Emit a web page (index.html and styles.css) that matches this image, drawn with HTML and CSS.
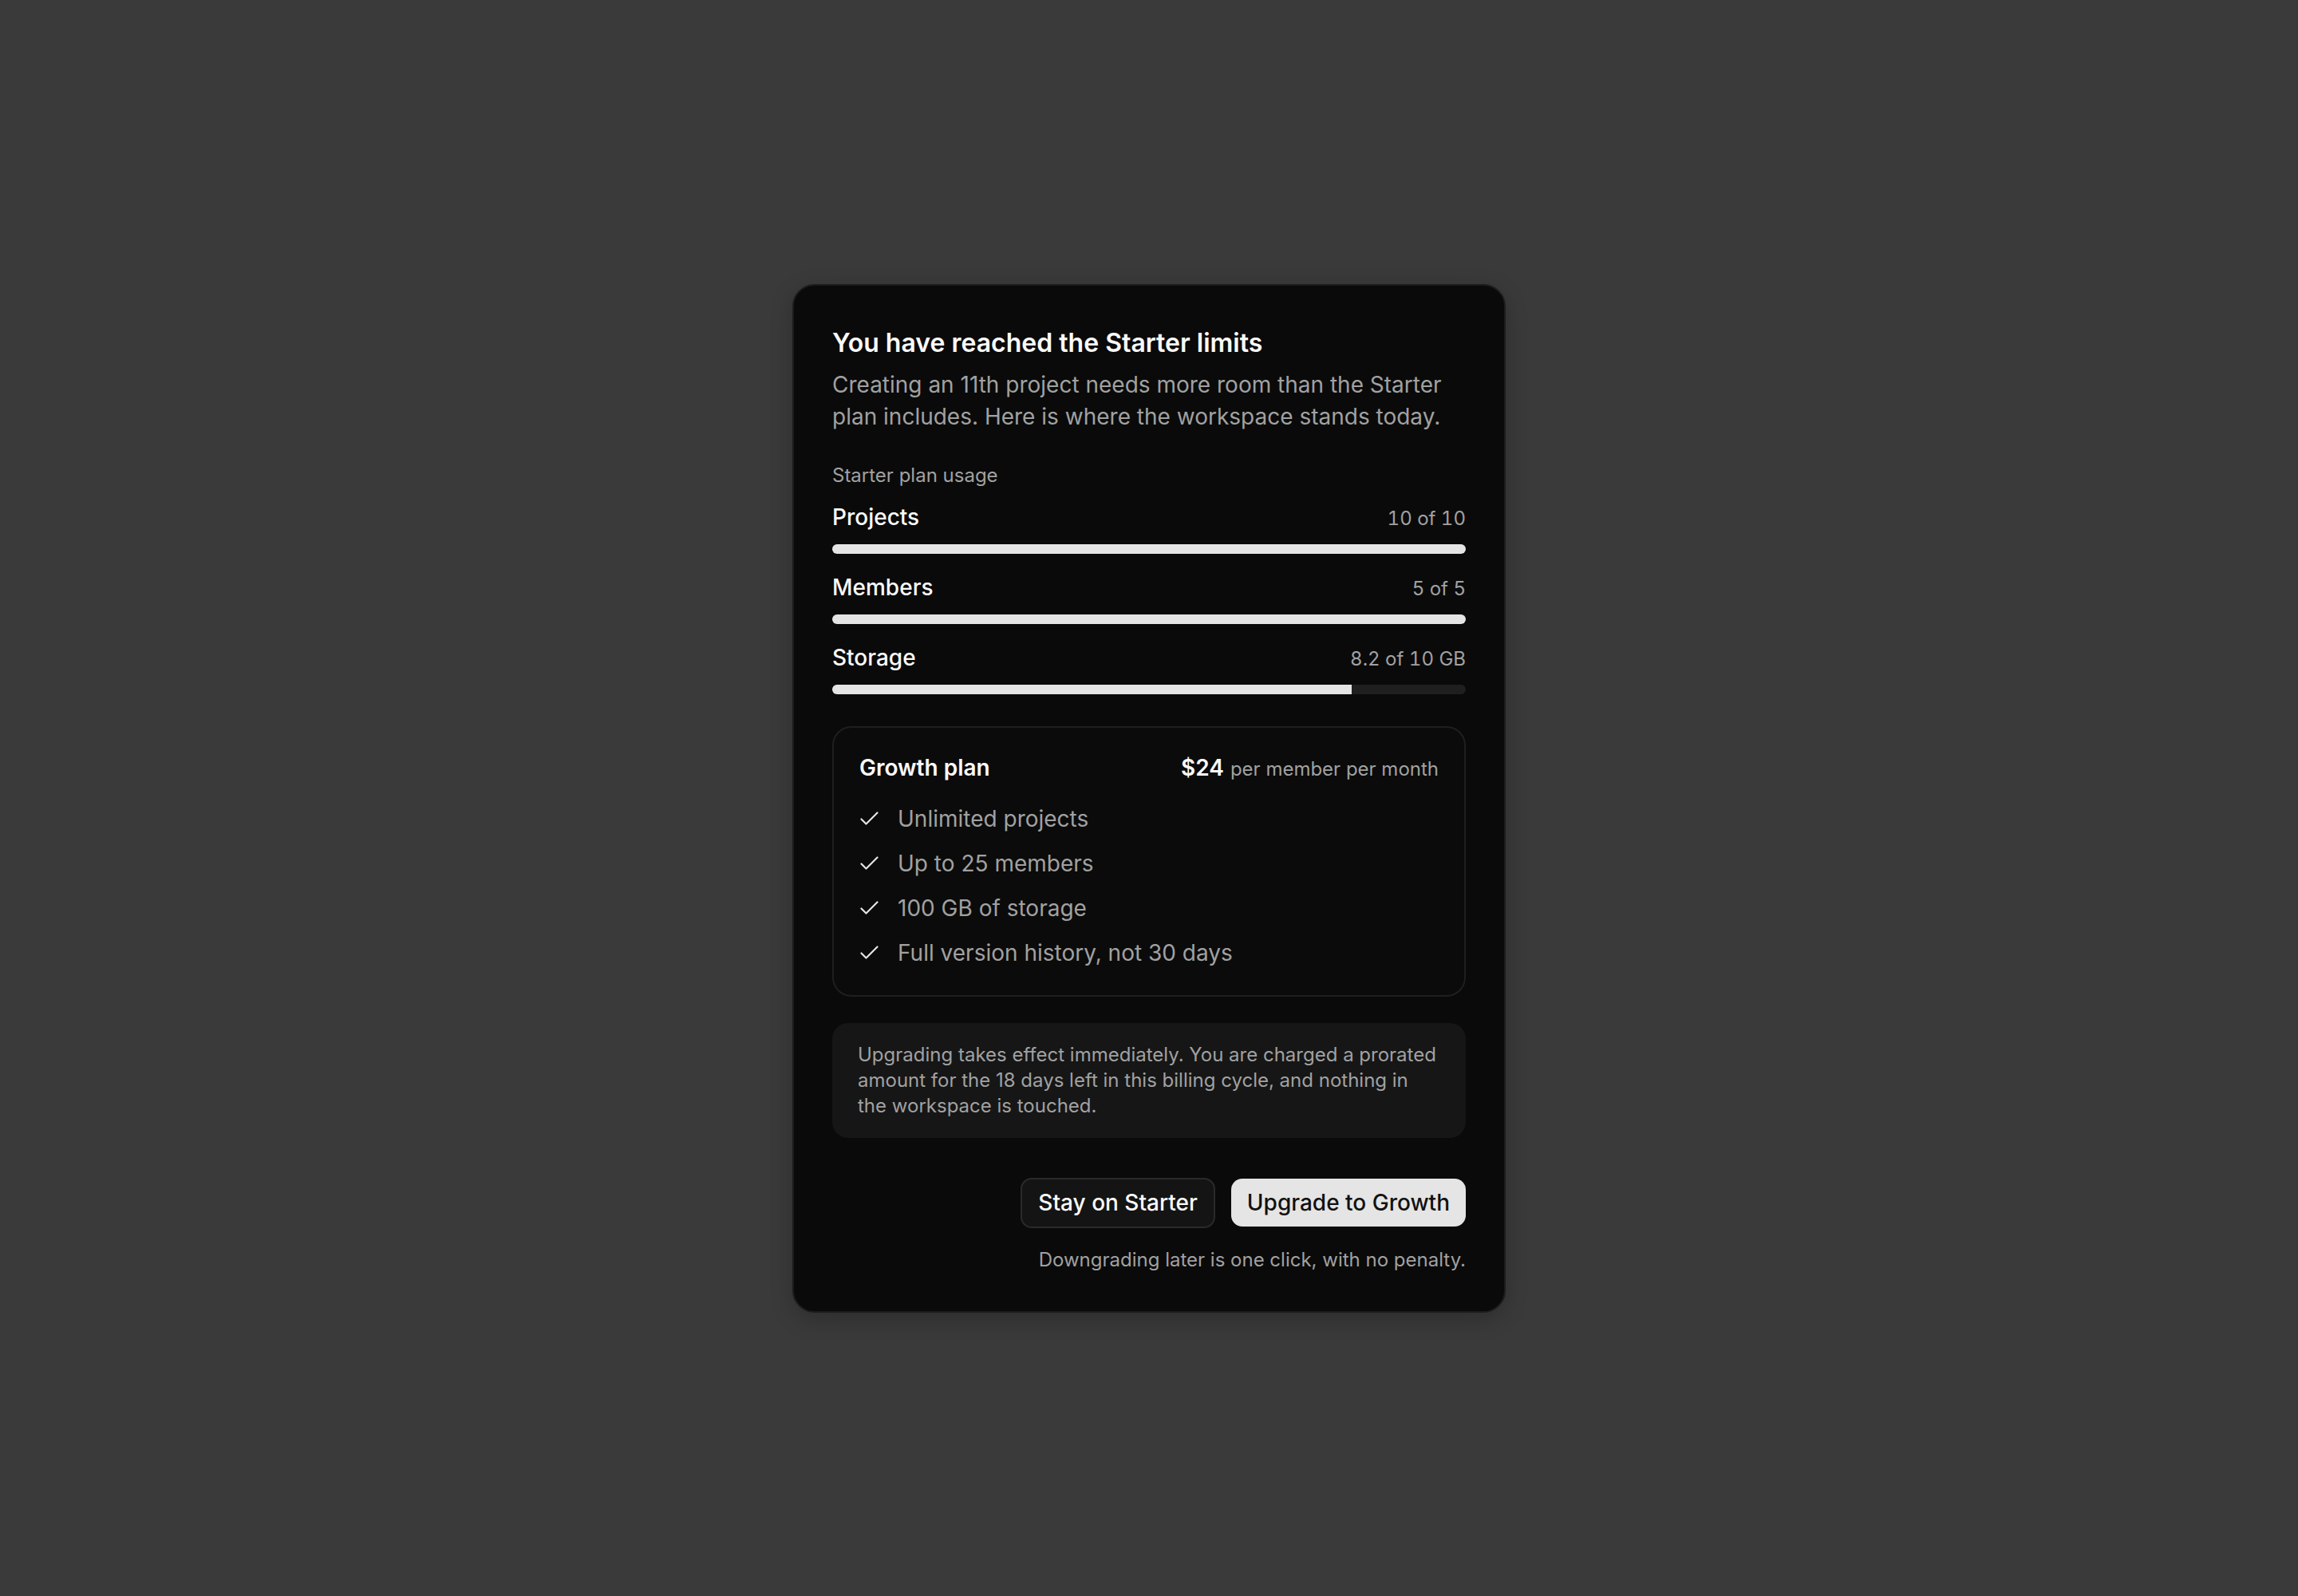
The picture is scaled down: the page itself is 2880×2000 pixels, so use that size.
FILE: index.html
```html
<!DOCTYPE html>
<html lang="en">
<head>
<meta charset="utf-8">
<title>Starter limits</title>
<link rel="stylesheet" href="styles.css">
</head>
<body>
<div class="card">
  <h1 class="title">You have reached the Starter limits</h1>
  <p class="subtitle">Creating an 11th project needs more room than the Starter plan includes. Here is where the workspace stands today.</p>

  <section class="usage">
    <div class="usage-heading">Starter plan usage</div>
    <div class="meter">
      <div class="meter-row"><span class="meter-label">Projects</span><span class="meter-value">10 of 10</span></div>
      <div class="track"><div class="fill" style="width:100%"></div></div>
    </div>
    <div class="meter">
      <div class="meter-row"><span class="meter-label">Members</span><span class="meter-value">5 of 5</span></div>
      <div class="track"><div class="fill" style="width:100%"></div></div>
    </div>
    <div class="meter">
      <div class="meter-row"><span class="meter-label">Storage</span><span class="meter-value">8.2 of 10 GB</span></div>
      <div class="track"><div class="fill" style="width:82%"></div></div>
    </div>
  </section>

  <section class="plan">
    <div class="plan-header">
      <span class="plan-name">Growth plan</span>
      <span class="price"><span class="price-amount">$24</span><span class="price-unit">per member per month</span></span>
    </div>
    <ul class="features">
      <li class="feature"><svg class="check" viewBox="0 0 24 24" width="24" height="24"><path d="M2.5 12.5 L8.5 18.5 L22.5 4.5"/></svg><span>Unlimited projects</span></li>
      <li class="feature"><svg class="check" viewBox="0 0 24 24" width="24" height="24"><path d="M2.5 12.5 L8.5 18.5 L22.5 4.5"/></svg><span>Up to 25 members</span></li>
      <li class="feature"><svg class="check" viewBox="0 0 24 24" width="24" height="24"><path d="M2.5 12.5 L8.5 18.5 L22.5 4.5"/></svg><span>100 GB of storage</span></li>
      <li class="feature"><svg class="check" viewBox="0 0 24 24" width="24" height="24"><path d="M2.5 12.5 L8.5 18.5 L22.5 4.5"/></svg><span>Full version history, not 30 days</span></li>
    </ul>
  </section>

  <div class="info">Upgrading takes effect immediately. You are charged a prorated amount for the 18 days left in this billing cycle, and nothing in the workspace is touched.</div>

  <div class="actions">
    <button class="btn btn-secondary">Stay on Starter</button>
    <button class="btn btn-primary">Upgrade to Growth</button>
  </div>
  <p class="footnote">Downgrading later is one click, with no penalty.</p>
</div>
</body>
</html>
```

FILE: styles.css
```css
* { box-sizing: border-box; margin: 0; padding: 0; }
html, body { height: 100%; }
body {
  background: #3a3a3a;
  font-family: Inter, "Noto Sans", sans-serif;
  display: flex;
  align-items: center;
  justify-content: center;
  min-height: 100vh;
}
.card {
  width: 894px;
  background: #0a0a0a;
  border: 2px solid #1c1c1c;
  border-radius: 28px;
  padding: 52px 48px 48px;
  box-shadow: 0 8px 28px rgba(0, 0, 0, 0.22);
}
.title {
  font-size: 32px;
  line-height: 40px;
  font-weight: 600;
  color: #fafafa;
}
.subtitle {
  margin-top: 12px;
  font-size: 28px;
  line-height: 40px;
  color: #a1a1a1;
}
.usage { margin-top: 38px; }
.usage-heading {
  font-size: 24px;
  line-height: 32px;
  color: #a1a1a1;
  margin-bottom: 16px;
}
.meter + .meter { margin-top: 22px; }
.meter-row {
  display: flex;
  justify-content: space-between;
  align-items: baseline;
  height: 40px;
  line-height: 40px;
  font-size: 24px;
}
.meter-label {
  font-size: 28px;
  font-weight: 500;
  color: #fafafa;
}
.meter-value {
  font-size: 24px;
  color: #a1a1a1;
  font-variant-numeric: tabular-nums;
}
.track {
  margin-top: 14px;
  height: 12px;
  border-radius: 6px;
  background: #1f1f1f;
  overflow: hidden;
}
.fill {
  height: 100%;
  background: #e5e5e5;
}
.plan {
  margin-top: 40px;
  border: 2px solid #1f1f1f;
  border-radius: 24px;
  padding: 32px 32px 33px;
  background: #0b0b0b;
}
.plan-header {
  display: flex;
  justify-content: space-between;
  align-items: baseline;
  height: 36px;
  line-height: 36px;
  font-size: 24px;
}
.plan-name {
  font-size: 28px;
  font-weight: 600;
  color: #fafafa;
}
.price { font-size: 24px; }
.price-amount {
  font-size: 28px;
  font-weight: 600;
  color: #fafafa;
}
.price-unit {
  font-size: 24px;
  color: #a1a1a1;
  margin-left: 8px;
}
.features {
  list-style: none;
  margin-top: 26px;
  display: flex;
  flex-direction: column;
  gap: 16px;
}
.feature {
  display: flex;
  align-items: center;
  gap: 24px;
  height: 40px;
  font-size: 28px;
  line-height: 40px;
  color: #a1a1a1;
}
.check {
  flex: none;
  fill: none;
  stroke: #e5e5e5;
  stroke-width: 2.2;
  stroke-linecap: round;
  stroke-linejoin: round;
}
.info {
  margin-top: 33px;
  background: #161616;
  border-radius: 20px;
  padding: 24px 32px;
  font-size: 24px;
  line-height: 32px;
  color: #a1a1a1;
}
.actions {
  margin-top: 50px;
  display: flex;
  justify-content: flex-end;
  align-items: center;
  gap: 20px;
}
.btn {
  font-family: inherit;
  font-size: 28px;
  font-weight: 500;
  height: 60px;
  padding: 0 20px;
  border-radius: 14px;
  display: inline-flex;
  align-items: center;
  cursor: pointer;
}
.btn-secondary {
  height: 63px;
  background: #141414;
  color: #fafafa;
  border: 2px solid #2a2a2a;
}
.btn-primary {
  background: #e5e5e5;
  color: #111111;
  border: none;
}
.footnote {
  margin-top: 24px;
  text-align: right;
  font-size: 24px;
  line-height: 32px;
  color: #a1a1a1;
}
```
